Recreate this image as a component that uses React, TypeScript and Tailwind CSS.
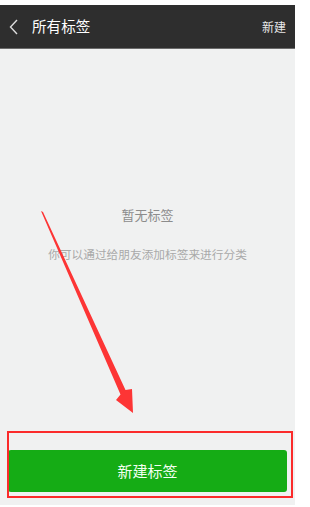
const font = { fontFamily: '"Noto Sans CJK SC", "Noto Sans", sans-serif' };

function Header() {
  return (
    <div className="flex h-[44px] items-center bg-[#2e2e2e] border-b border-[#6b6b6b] pl-[9px] pr-[9px] text-white">
      <svg width="10" height="16" viewBox="0 0 10 16" className="text-[#dcdcdc]">
        <polyline points="8,1 1.5,8 8,15" fill="none" stroke="currentColor" strokeWidth="1.4" />
      </svg>
      <span className="ml-[13px] text-[14.5px] leading-none tracking-[0.1px]">所有标签</span>
      <span className="ml-auto text-[12px] leading-none text-[#e8e8e8]">新建</span>
    </div>
  );
}

function RedArrow() {
  return (
    <svg className="pointer-events-none absolute left-0 top-0" width="310" height="507" viewBox="0 0 310 507">
      <polygon
        fill="#fd3535"
        points="41,211 43,212 125.5,390 132,389 133,413 116,400 120.5,394.5"
      />
    </svg>
  );
}

export default function App() {
  return (
    <div className="relative h-[507px] w-[310px] overflow-hidden bg-white pt-[5px]" style={font}>
      <div className="flex h-[500px] w-[295px] flex-col bg-[#f0f1f1]">
        <Header />
        <div className="flex flex-1 flex-col items-center">
          <p className="mt-[157px] text-[13px] leading-[18px] text-[#8c8c8c]">暂无标签</p>
          <p className="mt-[22px] text-[11.7px] leading-[16px] text-[#a9a9a9]">你可以通过给朋友添加标签来进行分类</p>
          <div className="mt-auto mb-[13px] w-full px-[8px]">
            <button className="flex h-[42px] w-full items-center justify-center rounded-[3px] bg-[#15ac15] text-[15px] text-[#f2fff2]">
              新建标签
            </button>
          </div>
        </div>
      </div>
      <div className="pointer-events-none absolute left-[7px] top-[431px] h-[67px] w-[286px] border-2 border-[#fb2b2b]" />
      <RedArrow />
    </div>
  );
}
